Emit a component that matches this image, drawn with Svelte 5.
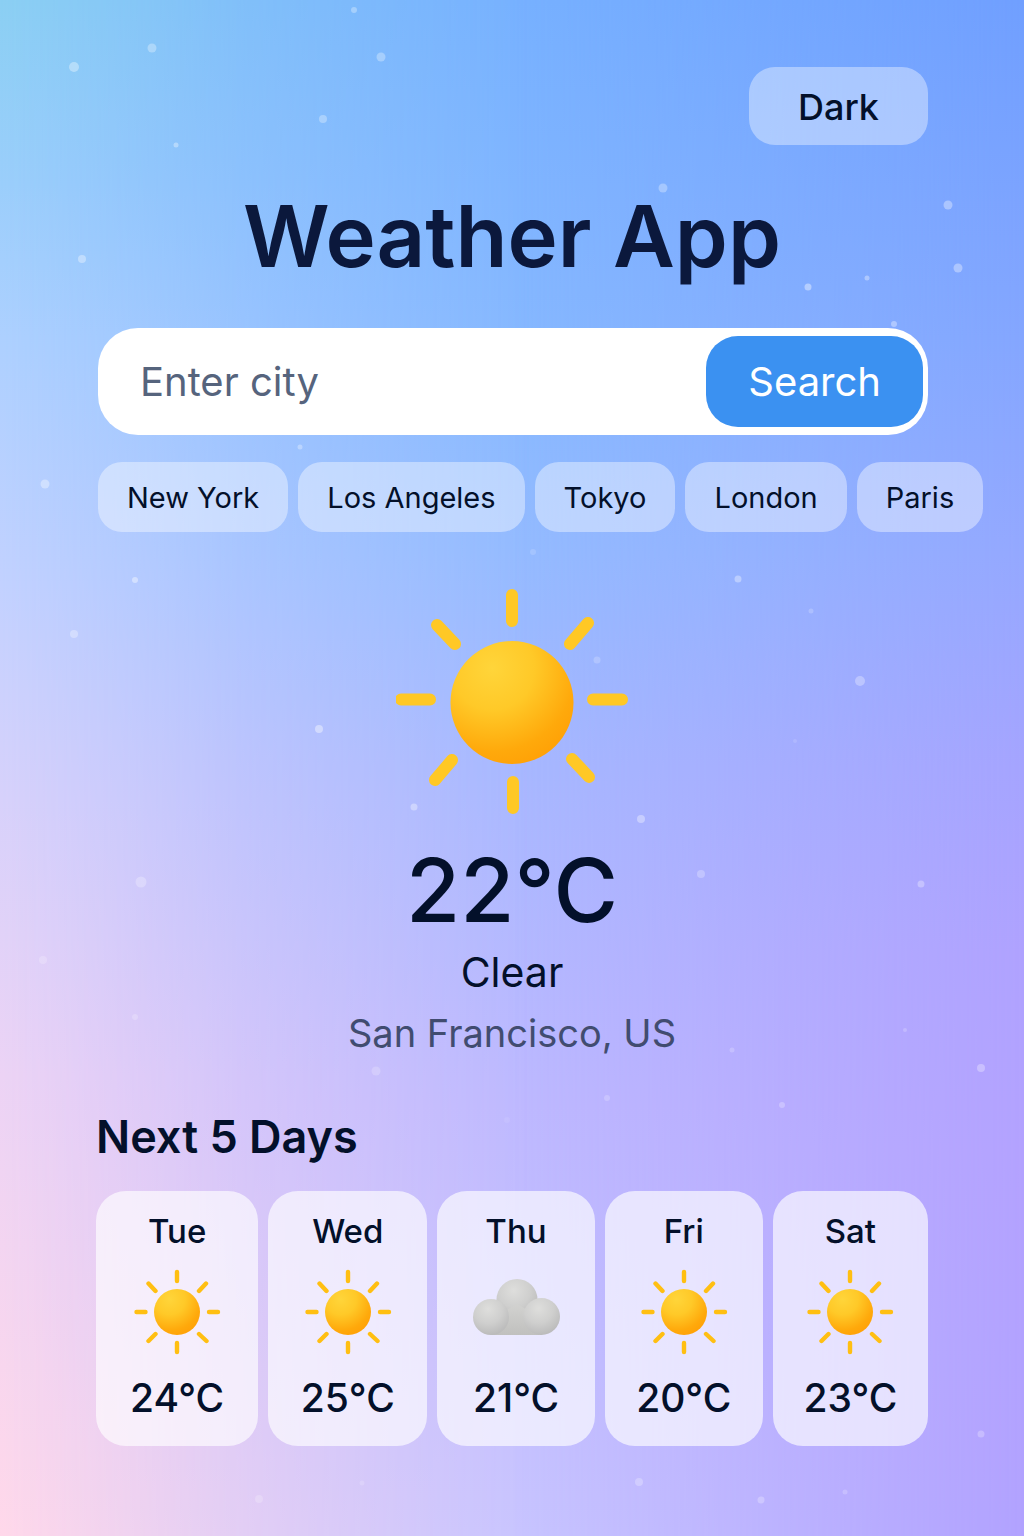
<script>
  const cities = ['New York', 'Los Angeles', 'Tokyo', 'London', 'Paris'];
  const forecast = [
    { day: 'Tue', icon: 'sun', temp: 24 },
    { day: 'Wed', icon: 'sun', temp: 25 },
    { day: 'Thu', icon: 'cloud', temp: 21 },
    { day: 'Fri', icon: 'sun', temp: 20 },
    { day: 'Sat', icon: 'sun', temp: 23 }
  ];
  const particles = [
    [74, 67, 5, 0.35], [152, 48, 4.5, 0.3], [354, 10, 3, 0.3], [381, 57, 4.5, 0.3],
    [323, 119, 4, 0.3], [176, 145, 2.5, 0.35], [82, 259, 4, 0.35], [663, 188, 4.5, 0.3],
    [948, 205, 4.5, 0.35], [958, 268, 4.5, 0.35], [867, 278, 2.5, 0.35], [808, 287, 3.5, 0.4],
    [894, 324, 3, 0.35], [300, 447, 2.5, 0.3], [45, 484, 4.5, 0.35], [135, 580, 3, 0.4],
    [74, 634, 4, 0.3], [533, 552, 3, 0.15], [738, 579, 3.5, 0.35], [811, 611, 2.5, 0.2],
    [597, 660, 3.5, 0.2], [860, 681, 5, 0.3], [319, 729, 4, 0.4], [795, 741, 2, 0.12],
    [414, 807, 3.5, 0.35], [641, 819, 4, 0.35], [701, 874, 4, 0.25], [141, 882, 5.5, 0.25],
    [921, 884, 3.5, 0.3], [43, 960, 4, 0.2], [135, 1017, 3, 0.2], [905, 1030, 2, 0.2],
    [732, 1050, 2.5, 0.2], [376, 1071, 4.5, 0.2], [981, 1068, 4, 0.3], [607, 1098, 3, 0.2],
    [782, 1105, 3, 0.25], [507, 1120, 3, 0.08], [981, 1434, 3.5, 0.25], [639, 1482, 4, 0.25],
    [362, 1483, 2.5, 0.15], [259, 1499, 4, 0.2], [761, 1500, 3.5, 0.25], [845, 1492, 2.5, 0.2]
  ];

  let dark = $state(false);
  let query = $state('');
  let city = $state('San Francisco, US');

  function search(event) {
    event.preventDefault();
    if (query.trim()) city = query.trim();
  }
</script>

<div class="page" class:dark>
  <svg class="particles" viewBox="0 0 1024 1536" preserveAspectRatio="xMidYMid slice" aria-hidden="true">
    <defs>
      <radialGradient id="sunFill" cx="0.34" cy="0.22" r="0.85">
        <stop offset="0" stop-color="#ffd53a" />
        <stop offset="0.4" stop-color="#ffc928" />
        <stop offset="0.8" stop-color="#ffa90b" />
        <stop offset="1" stop-color="#ffa006" />
      </radialGradient>
      <radialGradient id="puffFill" cx="0.42" cy="0.28" r="0.8">
        <stop offset="0" stop-color="#dededc" />
        <stop offset="0.5" stop-color="#cfcfce" />
        <stop offset="1" stop-color="#b6b6b6" />
      </radialGradient>
      <linearGradient id="baseFill" x1="0" y1="0" x2="0" y2="1">
        <stop offset="0" stop-color="#d2d2d0" />
        <stop offset="1" stop-color="#c0c0be" />
      </linearGradient>
    </defs>
    {#each particles as [x, y, r, o]}
      <circle cx={x} cy={y} {r} fill="#fff" fill-opacity={o} />
    {/each}
  </svg>

  <main>
    <button class="theme" type="button" onclick={() => (dark = !dark)}>{dark ? 'Light' : 'Dark'}</button>

    <h1>Weather App</h1>

    <form class="search" onsubmit={search}>
      <input type="text" placeholder="Enter city" aria-label="City" bind:value={query} />
      <button type="submit">Search</button>
    </form>

    <div class="chips">
      {#each cities as name}
        <button type="button" onclick={() => (city = name)}>{name}</button>
      {/each}
    </div>

    <section class="current">
      <svg class="big-sun" viewBox="0 0 232 226" aria-hidden="true">
        <circle cx="116" cy="113.500" r="61.500" fill="url(#sunFill)" />
        <path
          d="M116 6v26M117 193v26M5 110.500h29M197 110.500h29M41 36l18 19M192 34l-18 21M39 191l17-20M176 170l17 18"
          stroke="#ffc825"
          stroke-width="12"
          stroke-linecap="round"
          fill="none"
        />
      </svg>
      <p class="temp">22°C</p>
      <p class="condition">Clear</p>
      <p class="place">{city}</p>
    </section>

    <section class="forecast">
      <h2>Next 5 Days</h2>
      <ul>
        {#each forecast as f}
          <li>
            <span class="day">{f.day}</span>
            <svg class="icon" viewBox="0 0 88 88" aria-hidden="true">
              {#if f.icon === 'sun'}
                <circle cx="44" cy="44" r="23" fill="url(#sunFill)" />
                <path
                  d="M44 4v9M44 75v9M3.500 44h9M76 44h9M15.500 15.500l7 7.500M73 15.500l-7 7.500M15.500 73l7-7M66 66l7.500 7"
                  stroke="#ffbf12"
                  stroke-width="4.400"
                  stroke-linecap="round"
                  fill="none"
                />
              {:else}
                <circle cx="45" cy="31.500" r="20.500" fill="url(#puffFill)" />
                <path d="M19 67V56l12-12 14-8 14 8 11 12v11z" fill="url(#baseFill)" />
                <circle cx="19" cy="49" r="18" fill="url(#puffFill)" />
                <circle cx="69.500" cy="48.500" r="18.500" fill="url(#puffFill)" />
              {/if}
            </svg>
            <span class="value">{f.temp}°C</span>
          </li>
        {/each}
      </ul>
    </section>
  </main>
</div>

<style>
  :global(body) {
    margin: 0;
  }

  .page {
    position: relative;
    isolation: isolate;
    min-height: 100vh;
    box-sizing: border-box;
    overflow: hidden;
    font-family: Inter, 'Liberation Sans', sans-serif;
    color: #03102a;
    background: linear-gradient(#77b1ff, #88b9ff 25%, #94bbff 36%, #a7b8ff 50%, #beb9ff 72%, #c8c5ff);
  }

  /* Side tints fade into the central column of colour */
  .page::before,
  .page::after {
    content: '';
    position: absolute;
    inset: 0;
    z-index: -2;
  }

  .page::before {
    background: linear-gradient(#8bcff3, #9bcefb 12%, #add0ff 22%, #c2d1ff 38%, #d7d1fb 52%, #ecd3f5 70%, #ffd8ea);
    mask-image: linear-gradient(to right, #000, rgba(0, 0, 0, 0.48) 24%, transparent 52%);
  }

  .page::after {
    background: linear-gradient(#709fff, #84a6ff 22%, #94a8ff 36%, #a5a4ff 50%, #afa2ff 62%, #b3a2ff 75%, #b1a2ff);
    mask-image: linear-gradient(to left, #000, transparent 50%);
  }

  .page.dark {
    filter: brightness(0.7);
  }

  .particles {
    position: absolute;
    inset: 0;
    width: 100%;
    height: 100%;
    z-index: -1;
  }

  main {
    display: flex;
    flex-direction: column;
    padding: 67px 96px 88px;
  }

  button,
  input {
    font: inherit;
    color: inherit;
    border: 0;
    margin: 0;
  }

  button {
    cursor: pointer;
  }

  h1,
  h2,
  p,
  ul {
    margin: 0;
    padding: 0;
  }

  .theme {
    align-self: flex-end;
    padding: 16px 49px 14px;
    border-radius: 26px;
    background: rgba(255, 255, 255, 0.38);
    font-size: 36px;
    line-height: 48px;
    font-weight: 500;
  }

  h1 {
    margin-top: 44px;
    text-align: center;
    font-size: 85px;
    line-height: 96px;
    font-weight: 600;
    color: #0b183c;
  }

  .search {
    display: flex;
    margin: 43px 0 0 2px;
    padding: 8px 5px 8px 42px;
    border-radius: 40px;
    background: #fff;
    font-size: 40px;
    line-height: 51px;
  }

  .search input {
    flex: 1;
    min-width: 0;
    padding: 0;
    background: transparent;
    outline: 0;
  }

  .search input::placeholder {
    color: #56647d;
    opacity: 1;
  }

  .search button {
    padding: 20px 42px;
    border-radius: 32px;
    background: #3b91f1;
    color: #fff;
  }

  .chips {
    display: flex;
    gap: 10px;
    margin: 27px 0 0 2px;
  }

  .chips button {
    flex: none;
    padding: 16px 29px 14px;
    border-radius: 24px;
    background: rgba(255, 255, 255, 0.4);
    font-size: 29px;
    line-height: 40px;
  }

  .current {
    display: flex;
    flex-direction: column;
    align-items: center;
    margin-top: 57px;
    text-align: center;
  }

  .big-sun {
    width: 232px;
    height: 226px;
  }

  .temp {
    margin-top: 27px;
    font-size: 88px;
    line-height: 96px;
    font-weight: 500;
  }

  .condition {
    margin-top: 8px;
    font-size: 41px;
    line-height: 52px;
  }

  .place {
    margin-top: 9px;
    font-size: 38px;
    line-height: 52px;
    color: #414c70;
  }

  .forecast {
    margin-top: 50px;
  }

  h2 {
    font-size: 45px;
    line-height: 56px;
    font-weight: 600;
  }

  ul {
    display: grid;
    grid-template-columns: 162fr 159fr 157fr 158fr 155fr;
    gap: 10px;
    margin-top: 26px;
    list-style: none;
  }

  li {
    display: flex;
    flex-direction: column;
    align-items: center;
    padding: 20px 0 24px;
    border-radius: 30px;
    background: rgba(255, 255, 255, 0.65);
    font-weight: 500;
  }

  .day {
    font-size: 33px;
    line-height: 40px;
  }

  .icon {
    width: 88px;
    height: 88px;
    margin: 17px 0 18px;
  }

  .value {
    font-size: 39px;
    line-height: 48px;
  }
</style>
